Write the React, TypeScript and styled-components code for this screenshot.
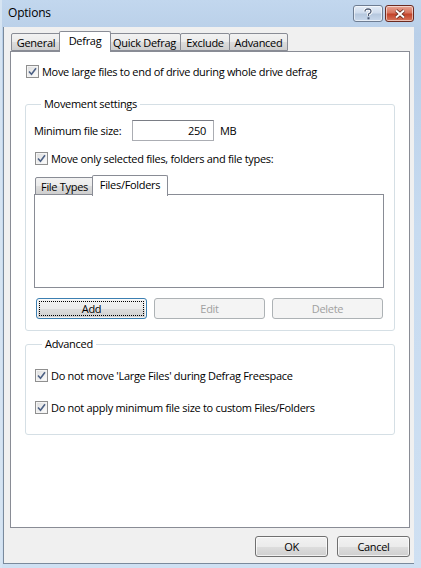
import React from 'react';
import styled, { createGlobalStyle } from 'styled-components';

const GlobalStyle = createGlobalStyle`
  html, body {
    margin: 0;
    padding: 0;
    background: #ffffff;
  }
  body {
    font-family: 'Open Sans', 'Liberation Sans', sans-serif;
    font-size: 11px;
    letter-spacing: -0.3px;
    color: #000000;
  }
  * {
    box-sizing: border-box;
  }
`

const Window = styled.div`
  width: 421px;
  height: 568px;
  display: flex;
  flex-direction: column;
  background: linear-gradient(180deg, #c2d7ee 0%, #b9cfe8 6%, #c7dbf0 40%, #cfe0f2 100%);
  border-left: 2px solid #d6e4f2;
  overflow: hidden;
`
const TitleBar = styled.div`
  height: 27px;
  display: flex;
  align-items: flex-start;
  justify-content: space-between;
  flex-shrink: 0;
`
const Title = styled.div`
  padding: 6px 0 0 6px;
  font-size: 12px;
  line-height: 14px;
  letter-spacing: -0.2px;
  color: #000000;
`
const Caption = styled.div`
  display: flex;
  gap: 2px;
  padding: 5px 7px 0 0;
`
const CaptionButton = styled.div<{ $close?: boolean }>`
  width: ${p => (p.$close ? '29px' : '30px')};
  height: 17px;
  border-radius: 3px;
  border: 1px solid ${p => (p.$close ? '#6b2a20' : '#6e7d92')};
  background: ${p =>
    p.$close
      ? 'linear-gradient(180deg, #e8a493 0%, #d7745e 45%, #c2432a 55%, #d8765c 100%)'
      : 'linear-gradient(180deg, #e4edf7 0%, #cfdced 45%, #b6c8de 55%, #c9d9ec 100%)'};
  box-shadow: inset 0 0 0 1px rgba(255, 255, 255, 0.55);
  display: flex;
  align-items: center;
  justify-content: center;
`
const Client = styled.div`
  flex: 1;
  display: flex;
  flex-direction: column;
  background: #f0f0f0;
  margin: 0 7px 5px 1px;
  padding: 4px 4px 6px 6px;
  border-left: 1px solid #7a8a9c;
  border-bottom: 1px solid #7a8a9c;
`
const TabStrip = styled.div`
  display: flex;
  align-items: flex-end;
  height: 20px;
  padding-left: 1px;
  position: relative;
  z-index: 1;
`
const Tab = styled.div<{ $active?: boolean; $w: number }>`
  width: ${p => p.$w}px;
  height: ${p => (p.$active ? '21px' : '18px')};
  margin: ${p => (p.$active ? '0 -2px -1px -2px' : '0 0 0 -1px')};
  border: 1px solid #898c95;
  border-bottom: ${p => (p.$active ? 'none' : '1px solid #898c95')};
  border-radius: 2px 2px 0 0;
  background: ${p => (p.$active ? '#ffffff' : 'linear-gradient(180deg, #f2f2f2 0%, #ebebeb 50%, #dddddd 51%, #cfcfcf 100%)')};
  display: flex;
  justify-content: center;
  padding-top: 1px;
  line-height: 15px;
  white-space: nowrap;
  position: relative;
  z-index: ${p => (p.$active ? 2 : 1)};
  &:first-child {
    margin-left: ${p => (p.$active ? '-2px' : '0')};
  }
`
const TabPanel = styled.div`
  height: 477px;
  background: #ffffff;
  border: 1px solid #898c95;
  padding: 13px 15px 0 14px;
  display: flex;
  flex-direction: column;
`
const CheckRow = styled.label<{ $indent?: number; $gap?: number }>`
  display: flex;
  align-items: center;
  gap: 3px;
  height: 13px;
  margin-left: ${p => p.$indent ?? 0}px;
  margin-top: ${p => p.$gap ?? 0}px;
  white-space: nowrap;
`
const Box = styled.span`
  width: 13px;
  height: 13px;
  flex-shrink: 0;
  border: 1px solid #8f8f8f;
  background: linear-gradient(135deg, #dcdcdc 0%, #f4f4f4 70%, #ffffff 100%);
  box-shadow: inset 0 0 0 1px #f4f4f4;
  display: flex;
  align-items: center;
  justify-content: center;
`
const Group = styled.fieldset<{ $top: number; $pad: string }>`
  margin: ${p => p.$top}px 0 0 0;
  padding: ${p => p.$pad};
  border: 1px solid #d5dfe5;
  border-radius: 3px;
  min-width: 0;
  width: 370px;
`
const Legend = styled.legend`
  padding: 0 3px;
  margin-left: 7px;
  font-size: 11px;
  line-height: 14px;
  color: #000000;
`
const SizeRow = styled.div`
  display: flex;
  align-items: center;
  height: 21px;
  margin-top: 9px;
`
const SizeLabel = styled.span`
  width: 98px;
`
const SizeInput = styled.div`
  width: 82px;
  height: 21px;
  border: 1px solid #abadb3;
  border-top-color: #7a7d85;
  background: #ffffff;
  text-align: right;
  padding: 2px 7px 0 0;
  line-height: 15px;
`
const Unit = styled.span`
  margin-left: 6px;
`
const InnerTabs = styled.div`
  margin-top: 10px;
`
const ListPanel = styled.div`
  height: 94px;
  border: 1px solid #898c95;
  background: #ffffff;
  margin-top: -1px;
`
const ButtonRow = styled.div`
  display: flex;
  gap: 7px;
  margin: 10px 1px 0 2px;
`
const PushButton = styled.div<{ $state?: 'default' | 'disabled' }>`
  flex: 1;
  height: 21px;
  border-radius: 3px;
  border: 1px solid ${p => (p.$state === 'disabled' ? '#adb2b5' : p.$state === 'default' ? '#3c7fb1' : '#707070')};
  background: ${p =>
    p.$state === 'disabled'
      ? '#f4f4f4'
      : 'linear-gradient(180deg, #f2f2f2 0%, #ebebeb 50%, #dddddd 51%, #cfcfcf 100%)'};
  color: ${p => (p.$state === 'disabled' ? '#a0a0a0' : '#000000')};
  box-shadow: ${p => (p.$state === 'disabled' ? 'none' : 'inset 0 0 0 1px rgba(255,255,255,0.7)')};
  display: flex;
  align-items: center;
  justify-content: center;
  position: relative;
  &::after {
    content: '';
    display: ${p => (p.$state === 'default' ? 'block' : 'none')};
    position: absolute;
    inset: 2px;
    border: 1px dotted #000000;
  }
`
const Footer = styled.div`
  display: flex;
  justify-content: flex-end;
  gap: 9px;
  margin-top: 8px;
`
const DialogButton = styled(PushButton)`
  flex: none;
  width: 73px;
`

const Check: React.FC = () => (
  <Box>
    <svg width="9" height="9" viewBox="0 0 9 9">
      <path d="M1 4.5 L3.5 7.2 L8 1.2" fill="none" stroke="#4d6185" strokeWidth="1.6" />
    </svg>
  </Box>
);

const Checkbox: React.FC<{ label: string; indent?: number; gap?: number }> = ({ label, indent, gap }) => (
  <CheckRow $indent={indent} $gap={gap}>
    <Check />
    <span>{label}</span>
  </CheckRow>
);

const tabs = [
  { name: 'General', w: 50 },
  { name: 'Defrag', w: 52, active: true },
  { name: 'Quick Defrag', w: 73 },
  { name: 'Exclude', w: 50 },
  { name: 'Advanced', w: 59 },
];

const App: React.FC = () => {
  return (
    <>
      <GlobalStyle />
      <Window>
        <TitleBar>
          <Title>Options</Title>
          <Caption>
            <CaptionButton>
              <svg width="10" height="12" viewBox="0 0 10 12">
                <path d="M2 3.5 Q2 1 5 1 Q8 1 8 3.5 Q8 5 5.5 6 L5.5 8" fill="none" stroke="#ffffff" strokeWidth="3" />
                <path d="M2 3.5 Q2 1 5 1 Q8 1 8 3.5 Q8 5 5.5 6 L5.5 8" fill="none" stroke="#4a5870" strokeWidth="1.3" />
                <rect x="4.5" y="9.3" width="2" height="2" fill="#4a5870" />
              </svg>
            </CaptionButton>
            <CaptionButton $close>
              <svg width="12" height="10" viewBox="0 0 12 10">
                <path d="M2 1.5 L10 8.5 M10 1.5 L2 8.5" stroke="#5a2318" strokeWidth="3.6" />
                <path d="M2 1.5 L10 8.5 M10 1.5 L2 8.5" stroke="#ffffff" strokeWidth="2" />
              </svg>
            </CaptionButton>
          </Caption>
        </TitleBar>
        <Client>
          <TabStrip>
            {tabs.map(t => (
              <Tab key={t.name} $w={t.w} $active={t.active}>{t.name}</Tab>
            ))}
          </TabStrip>
          <TabPanel>
            <Checkbox label="Move large files to end of drive during whole drive defrag" indent={1} />
            <Group $top={19} $pad="0 10px 11px 8px">
              <Legend>Movement settings</Legend>
              <SizeRow>
                <SizeLabel>Minimum file size:</SizeLabel>
                <SizeInput>250</SizeInput>
                <Unit>MB</Unit>
              </SizeRow>
              <Checkbox label="Move only selected files, folders and file types:" indent={1} gap={11} />
              <InnerTabs>
                <TabStrip>
                  <Tab $w={59}>File Types</Tab>
                  <Tab $w={76} $active>Files/Folders</Tab>
                </TabStrip>
                <ListPanel />
              </InnerTabs>
              <ButtonRow>
                <PushButton $state="default">Add</PushButton>
                <PushButton $state="disabled">Edit</PushButton>
                <PushButton $state="disabled">Delete</PushButton>
              </ButtonRow>
            </Group>
            <Group $top={6} $pad="18px 10px 20px 9px">
              <Legend>Advanced</Legend>
              <Checkbox label="Do not move 'Large Files' during Defrag Freespace" />
              <Checkbox label="Do not apply minimum file size to custom Files/Folders" gap={19} />
            </Group>
          </TabPanel>
          <Footer>
            <DialogButton>OK</DialogButton>
            <DialogButton>Cancel</DialogButton>
          </Footer>
        </Client>
      </Window>
    </>
  );
};

export default App;
